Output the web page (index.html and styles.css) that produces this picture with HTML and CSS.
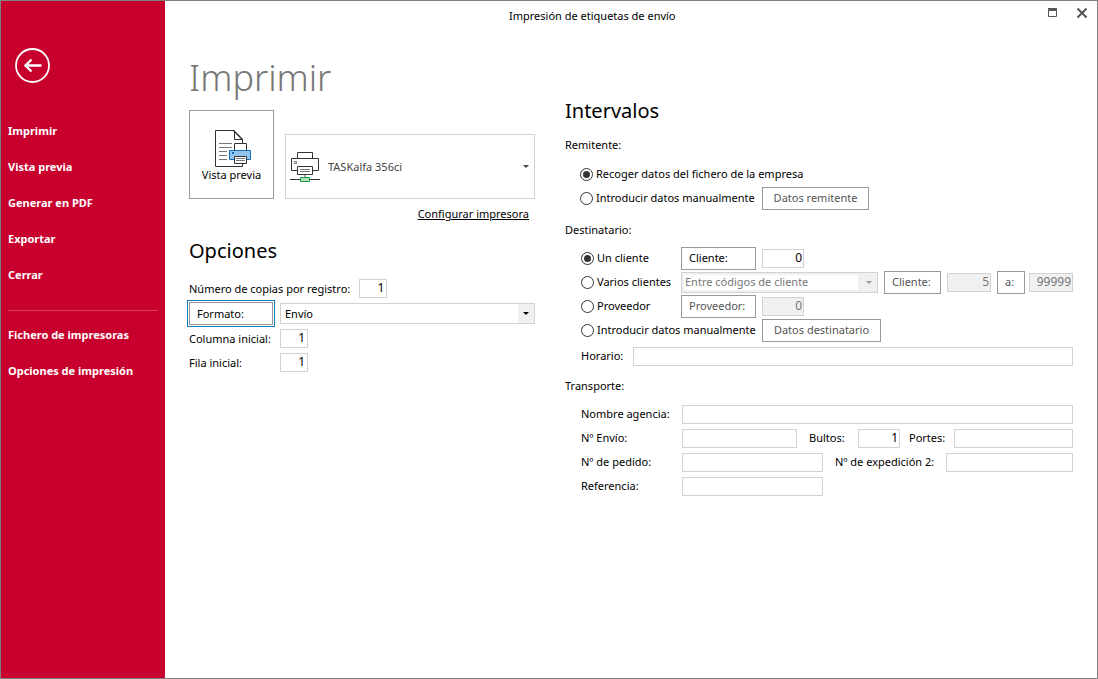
FILE: index.html
```html
<!DOCTYPE html>
<html lang="es">
<head>
<meta charset="utf-8">
<title>Impresión de etiquetas de envío</title>
<link rel="stylesheet" href="styles.css">
</head>
<body>
<div class="window">
  <nav class="sidebar">
    <button class="back" type="button" aria-label="Volver">
      <svg width="36" height="36" viewBox="0 0 36 36" fill="none" stroke="#fff"><circle cx="18.500" cy="17.500" r="16.5" stroke-width="1.8"/><path d="M27.500 17.500H11M17.500 11.500L11.500 17.500L17.500 23.500" stroke-width="2.400"/></svg>
    </button>
    <a class="nav-item" href="#imprimir">Imprimir</a>
    <a class="nav-item" href="#vista">Vista previa</a>
    <a class="nav-item" href="#pdf">Generar en PDF</a>
    <a class="nav-item" href="#exportar">Exportar</a>
    <a class="nav-item" href="#cerrar">Cerrar</a>
    <hr class="nav-rule">
    <a class="nav-item" href="#impresoras">Fichero de impresoras</a>
    <a class="nav-item" href="#opciones">Opciones de impresión</a>
  </nav>
  <div class="main">
    <header class="titlebar">
      <span class="caption">Impresión de etiquetas de envío</span>
      <button class="win-btn" type="button" aria-label="Maximizar"><svg width="12" height="12" viewBox="0 0 12 12"><path d="M2.500 2.500h8v7h-8zM2 1.500h9M2 3.500h9" fill="none" stroke="#555"/></svg></button>
      <button class="win-btn" type="button" aria-label="Cerrar ventana"><svg width="12" height="12" viewBox="0 0 12 12"><path d="M1.500 1.500l9 9M10.500 1.500l-9 9" stroke="#555" stroke-width="2"/></svg></button>
    </header>
    <div class="columns">
      <section class="left">
        <h1>Imprimir</h1>
        <div class="print-row">
          <button class="preview" type="button">
            <svg width="38" height="40" viewBox="0 0 38 40"><path d="M1.500 1.500h18l9 9v27h-27z" fill="#fff" stroke="#333"/><path d="M20.500 1.500v9h8" fill="none" stroke="#333"/><path d="M19.500 1.500l9 9" stroke="#333" stroke-width="1.500"/><path d="M5 14.500h13M5 18.500h13M5 22.500h8M5 26.500h8M5 30.500h8" stroke="#777"/><path d="M20.500 21v-6.500h12v7" fill="#fff" stroke="#333"/><path d="M15.500 21.500h21v9h-21z" fill="#92c5ee" stroke="#1a6fb8"/><path d="M18 23h2v2h-2z" fill="#1a6fb8"/><path d="M20.500 27.500h12v7h-12z" fill="#fff" stroke="#333"/><path d="M22 29.500h9M22 31.500h9" stroke="#777"/></svg>
            <span>Vista previa</span>
          </button>
          <div class="combo printer">
            <svg class="printer-icon" width="30" height="32" viewBox="0 0 30 32"><path d="M7.500 7V1.500h15V7" fill="#fff" stroke="#333"/><path d="M1.500 7.500h27v12h-27z" fill="#fff" stroke="#333"/><path d="M4.500 10.500h2v2h-2z" fill="none" stroke="#777"/><path d="M7.500 15.500h15v8h-15z" fill="#fff" stroke="#333"/><path d="M10 18.500h10M10 20.500h10" stroke="#777"/><path d="M15 24v3" stroke="#aaa" stroke-width="2"/><path d="M0 28.500h30" stroke="#333"/><path d="M10.500 26.500h9v4h-9z" fill="#b9dfbe" stroke="#0f9d3f"/></svg>
            <select aria-label="Impresora"><option>TASKalfa 356ci</option></select>
            <span class="arrow"></span>
          </div>
        </div>
        <a class="configure" href="#configurar">Configurar impresora</a>
        <h2>Opciones</h2>
        <div class="option"><label for="copias">Número de copias por registro:</label><input class="num tiny" id="copias" value="1"></div>
        <div class="option"><button class="btn format focused" type="button">Formato:</button>
          <div class="combo boxed"><select aria-label="Formato"><option>Envío</option></select><span class="arrow"></span></div></div>
        <div class="option"><label class="w-format" for="columna">Columna inicial:</label><input class="num tiny" id="columna" value="1"></div>
        <div class="option"><label class="w-format" for="fila">Fila inicial:</label><input class="num tiny" id="fila" value="1"></div>
      </section>
      <section class="right">
        <h2>Intervalos</h2>
        <h3>Remitente:</h3>
        <div class="group sender">
          <div class="row"><label class="radio"><input type="radio" name="rem" checked>Recoger datos del fichero de la empresa</label></div>
          <div class="row"><label class="radio wide"><input type="radio" name="rem">Introducir datos manualmente</label><button class="btn dim center w-remitente" type="button">Datos remitente</button></div>
        </div>
        <h3>Destinatario:</h3>
        <div class="group">
          <div class="row"><label class="radio"><input type="radio" name="dest" checked>Un cliente</label><button class="btn w-side" type="button">Cliente:</button><input class="num" aria-label="Código de cliente" value="0"></div>
          <div class="row"><label class="radio"><input type="radio" name="dest">Varios clientes</label>
            <div class="combo boxed off"><select disabled aria-label="Criterio"><option>Entre códigos de cliente</option></select><span class="arrow"></span></div>
            <button class="btn dim w-from" type="button">Cliente:</button><input class="num range" disabled aria-label="Desde cliente" value="5">
            <div class="upto"><button class="btn dim w-to" type="button">a:</button><input class="num range" disabled aria-label="Hasta cliente" value="99999"></div></div>
          <div class="row"><label class="radio"><input type="radio" name="dest">Proveedor</label><button class="btn dim w-side" type="button">Proveedor:</button><input class="num" disabled aria-label="Código de proveedor" value="0"></div>
          <div class="row"><label class="radio wide"><input type="radio" name="dest">Introducir datos manualmente</label><button class="btn dim center w-destinatario" type="button">Datos destinatario</button></div>
          <div class="row schedule"><label for="horario">Horario:</label><input class="fill" id="horario"></div>
        </div>
        <h3>Transporte:</h3>
        <div class="group">
          <div class="row"><label class="w-field" for="agencia">Nombre agencia:</label><input class="fill" id="agencia"></div>
          <div class="row"><label class="w-field" for="envio">Nº Envío:</label><input class="w-envio" id="envio"><label class="next w-bultos" for="bultos">Bultos:</label><input class="num" id="bultos" value="1"><label class="w-portes" for="portes">Portes:</label><input class="fill" id="portes"></div>
          <div class="row"><label class="w-field" for="pedido">Nº de pedido:</label><input class="w-pedido" id="pedido"><label class="next w-expedicion" for="expedicion">Nº de expedición 2:</label><input class="fill" id="expedicion"></div>
          <div class="row"><label class="w-field" for="referencia">Referencia:</label><input class="w-pedido" id="referencia"></div>
        </div>
      </section>
    </div>
  </div>
</div>
</body>
</html>
```
FILE: styles.css
```css
* { box-sizing: border-box; }
body { margin: 0; background: #fff; color: #000; }
body, button, input, select { font-family: "Noto Sans", "Open Sans", sans-serif; font-size: 11px; line-height: 16px; }
button { cursor: pointer; }

.window { display: flex; min-height: 100vh; border: 1px solid #808080; }

.sidebar { flex: none; width: 164px; padding: 47px 7px 0; background: #c8002d; color: #fff; }
.back { display: block; margin: 0 0 29px 6px; padding: 0; border: 0; background: none; height: 36px; }
.nav-item { display: block; height: 36px; line-height: 36px; font-weight: bold; color: #fff; text-decoration: none; white-space: nowrap; }
.nav-rule { margin: 17px 0 6px; border: 0; border-top: 1px solid #d8405f; }

.main { flex: 1; min-width: 0; }
.titlebar { display: flex; align-items: flex-start; gap: 18px; padding: 6px 9px 0 0; height: 32px; }
.caption { flex: 1; padding-left: 344px; line-height: 18px; }
.win-btn { display: block; padding: 0; border: 0; background: none; width: 12px; height: 12px; line-height: 0; }

.columns { display: flex; gap: 30px; padding: 0 24px 24px; }
.left { flex: none; width: 346px; padding-top: 18px; }
.right { flex: 1; min-width: 0; padding-top: 64px; }

h1 { margin: 0 0 5px; font-size: 36px; line-height: 54px; font-weight: 300; color: #777; }
h2 { margin: 0; font-size: 20px; line-height: 28px; font-weight: 400; }
h3 { margin: 0; font-size: 11px; line-height: 24px; font-weight: 400; }

.print-row { display: flex; align-items: flex-end; gap: 11px; }
.preview { flex: none; display: flex; flex-direction: column; align-items: center; width: 85px; height: 89px; padding: 18px 0 0; border: 1px solid #999; background: #fff; color: #000; }
.preview svg { margin: 0 0 -2px 2px; }

.combo { flex: 1; min-width: 0; display: grid; grid-template-columns: minmax(0, 1fr) 16px; border: 1px solid #d2d2d2; }
.combo select { grid-area: 1 / 1 / 2 / 3; min-width: 0; appearance: none; border: 0; border-radius: 0; margin: 0; padding: 0 18px 0 4px; background: transparent; color: #000; }
.combo .arrow { grid-area: 1 / 2; display: grid; place-items: center; pointer-events: none; }
.arrow::after { content: ""; border: 3px solid transparent; border-top-color: currentColor; border-bottom: 0; }
.printer { height: 65px; color: #444; }
.printer select { padding-left: 42px; color: #444; }
.printer-icon { grid-area: 1 / 1; align-self: center; margin-left: 4px; pointer-events: none; }
.boxed { height: 21px; }
.boxed .arrow { background: #f0f0f0; }
.off { background: linear-gradient(#fff, #fff) no-repeat 2px 2px / calc(100% - 21px) calc(100% - 4px) #f0f0f0; color: #999; }
.off select { padding-left: 3px; color: #777; opacity: 1; }

.configure { display: block; margin: 6px 6px 14px 0; text-align: right; line-height: 18px; color: #000; }
.left h2 { margin-bottom: 11px; }
.option { display: flex; align-items: center; gap: 7px; height: 25px; }
.option:last-child { height: 23px; }
.option > label:not(.w-format) { margin-right: 2px; }
.w-format { width: 84px; }

input { height: 19px; margin: 0; padding: 0 3px; border: 1px solid #d2d2d2; border-radius: 0; background: #fff; color: #000; min-width: 0; }
input:disabled { background: #f0f0f0; color: #777; }
.num { flex: none; width: 42px; padding: 0 1px 2px; text-align: right; font-size: 12px; }
.range { width: 44px; }
.tiny { width: 28px; padding-right: 2px; }
.fill { flex: 1; }

.btn { flex: none; height: 23px; padding: 0 0 0 7px; border: 1px solid #999; background: #fff; color: #000; text-align: left; white-space: nowrap; }
.dim { color: #555; }
.center { padding: 0; text-align: center; }
.format { width: 84px; }
.focused { outline: 1px solid #1080c0; outline-offset: 1px; }

.group { padding: 4px 0 4px 16px; }
.sender { padding: 5px 0 8px 15px; }
.row { display: flex; align-items: center; gap: 6px; height: 24px; }
.row label { flex: none; white-space: nowrap; }
.radio { display: flex; align-items: center; gap: 3px; width: 94px; }
.radio.wide { width: 175px; }
.sender .wide { width: 176px; }
.radio input { appearance: none; flex: none; width: 13px; height: 13px; padding: 2px; border: 1px solid #333; border-radius: 50%; }
.radio input:checked { background: #333; background-clip: content-box; }
.right h2 { margin-bottom: 8px; }
.schedule { height: 28px; }
.schedule label { width: 46px; }
.upto { display: flex; align-items: center; gap: 4px; }
.w-side { width: 75px; }
.w-from { width: 57px; }
.w-to { width: 28px; }
.w-remitente { width: 107px; }
.w-destinatario { width: 119px; }
.w-field { width: 95px; }
.w-envio { width: 115px; }
.w-pedido { width: 141px; }
.next { margin-left: 6px; }
.w-bultos { width: 43px; }
.row .w-portes { width: 39px; margin-left: 3px; }
.w-expedicion { width: 105px; }
```
